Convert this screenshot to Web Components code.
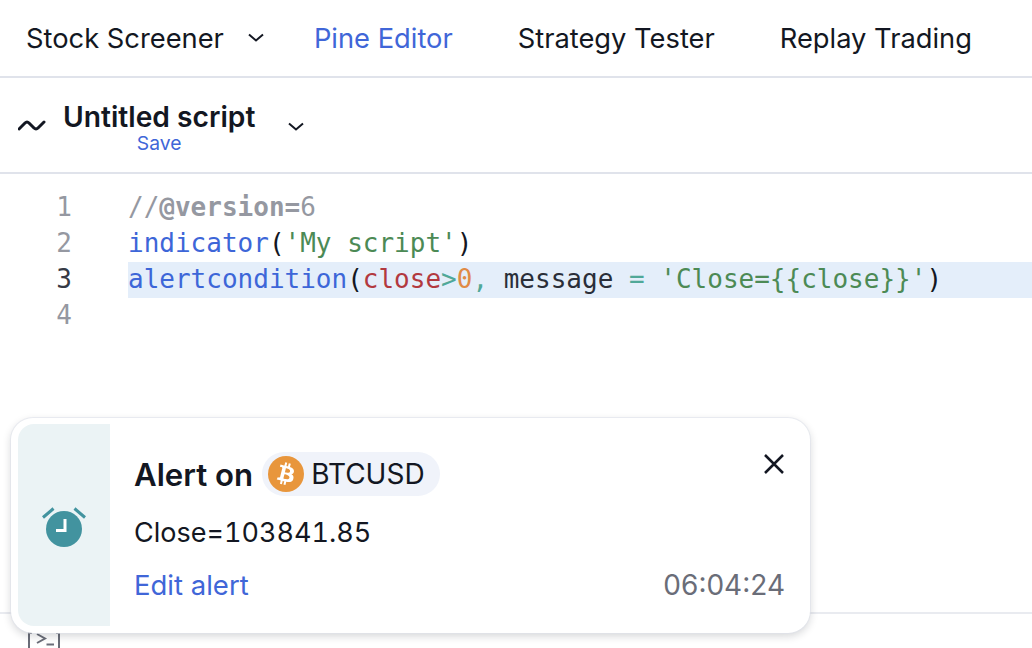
<!DOCTYPE html>
<html lang="en">
<head>
<meta charset="utf-8">
<title>Pine Editor</title>
<style>
html,body{ margin:0; height:100%; background:#fff; }
body{
    display:flex;
    flex-direction:column;
    height:648px;
    overflow:hidden;
    position:relative;
    font-family:Inter,"Liberation Sans",sans-serif;
    color:#131722;
}
</style>
</head>
<body>
<tv-tab-bar>
    <tv-tab dropdown>Stock Screener</tv-tab>
    <tv-tab active>Pine Editor</tv-tab>
    <tv-tab>Strategy Tester</tv-tab>
    <tv-tab>Replay Trading</tv-tab>
</tv-tab-bar>
<tv-script-header title-text="Untitled script" action="Save"></tv-script-header>
<tv-code-editor>
    <tv-code-line number="1"><span class="c">//</span><b class="c">@version=</b><span class="c">6</span></tv-code-line>
    <tv-code-line number="2"><span class="f">indicator</span>(<span class="s">'My script'</span>)</tv-code-line>
    <tv-code-line number="3" active><span class="f">alertcondition</span>(<span class="v">close</span><span class="o">&gt;</span><span class="n">0</span><span class="o">,</span> <span class="p">message</span> <span class="o">=</span> <span class="s">'Close={{close}}'</span>)</tv-code-line>
    <tv-code-line number="4"></tv-code-line>
</tv-code-editor>
<tv-bottom-bar></tv-bottom-bar>
<tv-alert-toast symbol="BTCUSD" message="Close=103841.85" link="Edit alert" time="06:04:24"></tv-alert-toast>

<script>
const chevron = `<svg width="16" height="9" viewBox="0 0 16 9" fill="none" stroke="currentColor" stroke-width="2"><path d="M1 1.500l7 6 7-6"/></svg>`;

class TvTabBar extends HTMLElement {
    constructor() {
        super();
        this.attachShadow({ mode: 'open' }).innerHTML = `
        <style>
        :host{
            display:flex;
            flex:none;
            align-items:center;
            gap:50px;
            box-sizing:border-box;
            height:78px;
            padding:1px 0 0 26px;
            border-bottom:2px solid #e0e3eb;
        }
        </style>
        <slot></slot>`;
    }
}

class TvTab extends HTMLElement {
    constructor() {
        super();
        this.attachShadow({ mode: 'open' }).innerHTML = `
        <style>
        :host{
            display:flex;
            align-items:center;
            gap:24px;
            font-size:27.300px;
            line-height:36px;
            color:#131722;
            white-space:nowrap;
        }
        :host(:not([dropdown])){ padding-right:15px; }
        :host([active]){ color:#4066d8; }
        svg{ display:none; margin-top:-3px; }
        :host([dropdown]) svg{ display:block; }
        </style>
        <slot></slot>${chevron}`;
    }
}

class TvScriptHeader extends HTMLElement {
    constructor() {
        super();
        this.attachShadow({ mode: 'open' }).innerHTML = `
        <style>
        :host{
            display:flex;
            flex:none;
            align-items:flex-start;
            box-sizing:border-box;
            height:96px;
            padding:23px 0 0 18px;
            border-bottom:2px solid #e0e3eb;
        }
        .wave{ margin:17px 17px 0 0; }
        .name{ display:flex; flex-direction:column; align-items:center; }
        .title{ font-size:28.200px; line-height:32px; font-weight:600; }
        .action{ font-size:19.300px; line-height:20px; color:#4066d8; }
        .more{ display:block; margin:21px 0 0 33px; }
        .more svg{ display:block; }
        </style>
        <svg class="wave" width="28" height="16" viewBox="0 0 28 16" fill="none" stroke="currentColor" stroke-width="3" stroke-linecap="round" stroke-linejoin="round"><path d="M1 11L7 5q2-2 4 0l5 5q2 2 4 0l6-6"/></svg>
        <div class="name">
            <span class="title"></span>
            <span class="action"></span>
        </div>
        <span class="more">${chevron}</span>`;
    }

    connectedCallback() {
        this.shadowRoot.querySelector('.title').textContent = this.getAttribute('title-text');
        this.shadowRoot.querySelector('.action').textContent = this.getAttribute('action');
    }
}

class TvCodeEditor extends HTMLElement {
    constructor() {
        super();
        this.attachShadow({ mode: 'open' }).innerHTML = `
        <style>
        :host{
            display:block;
            flex:1;
            padding-top:16px;
            font-family:"DejaVu Sans Mono","Liberation Mono",monospace;
            font-size:26px;
        }
        </style>
        <slot></slot>`;
    }
}

class TvCodeLine extends HTMLElement {
    constructor() {
        super();
        this.attachShadow({ mode: 'open' }).innerHTML = `
        <style>
        :host{
            display:flex;
            height:36px;
            line-height:34px;
            white-space:pre;
            color:#131722;
        }
        .num{
            flex:none;
            width:72px;
            margin-right:56px;
            text-align:right;
            color:#9598a1;
        }
        :host([active]) .num{ color:#363a45; }
        .text{ flex:1; }
        :host([active]) .text{ background:#e4eefa; }
        ::slotted(.c){ color:#9598a1; }
        ::slotted(.f){ color:#3d66d8; }
        ::slotted(.s){ color:#4c8a55; }
        ::slotted(.v){ color:#b2393f; }
        ::slotted(.o){ color:#50a898; }
        ::slotted(.n){ color:#e08a45; }
        ::slotted(.p){ color:#2a2e39; }
        </style>
        <span class="num"></span><span class="text"><slot></slot></span>`;
    }

    connectedCallback() {
        this.shadowRoot.querySelector('.num').textContent = this.getAttribute('number');
    }
}

class TvBottomBar extends HTMLElement {
    constructor() {
        super();
        this.attachShadow({ mode: 'open' }).innerHTML = `
        <style>
        :host{
            display:block;
            flex:none;
            box-sizing:border-box;
            height:36px;
            padding:18px 0 0 28px;
            border-top:2px solid #e9ebf0;
            color:#6a6d78;
        }
        svg{ display:block; }
        </style>
        <svg width="33" height="16" viewBox="0 0 33 16" fill="none" stroke="currentColor" stroke-width="2"><path d="M4 1H1v15M28 1h3v15M9 2l8 4.500-8 4.500M18.500 12.500H26"/></svg>`;
    }
}

class TvAlertToast extends HTMLElement {
    constructor() {
        super();
        this.attachShadow({ mode: 'open' }).innerHTML = `
        <style>
        :host{
            position:absolute;
            left:11px;
            top:418px;
            display:flex;
            box-sizing:border-box;
            width:799px;
            height:215px;
            padding:6px 7px 7px;
            background:#fff;
            border-radius:22px;
            box-shadow:0 0 0 1px rgba(224,227,235,.6), 0 3px 8px rgba(19,23,34,.18);
        }
        .side{
            flex:none;
            display:flex;
            align-items:center;
            justify-content:center;
            box-sizing:border-box;
            width:92px;
            padding-top:3px;
            background:#ebf3f5;
            border-radius:16px 0 0 16px;
        }
        .body{
            flex:1;
            display:flex;
            flex-direction:column;
            padding:28px 18px 0 24px;
        }
        .head{ display:flex; align-items:flex-start; justify-content:space-between; }
        .title{ display:flex; align-items:center; gap:9px; font-size:31.200px; font-weight:600; }
        .label{ padding-top:2px; }
        .pill{
            display:flex;
            align-items:center;
            gap:7px;
            height:44px;
            padding:0 15px 0 6px;
            border-radius:22px;
            background:#f0f3fa;
            font-size:28px;
            font-weight:400;
        }
        .pill svg{ display:block; }
        .close{ display:block; margin:2px 1px 0 0; }
        .msg{ font-size:27px; line-height:36px; margin-top:19px; font-variant-numeric:tabular-nums; }
        .foot{
            display:flex;
            justify-content:space-between;
            line-height:36px;
            margin-top:16px;
        }
        .link{ color:#4066d8; font-size:27.500px; }
        .time{ color:#6a6d78; font-size:28px; }
        </style>
        <div class="side">
            <svg width="44" height="40" viewBox="0 0 44 40" fill="none">
                <circle cx="22" cy="22" r="18" fill="#42939f"/>
                <path d="M1 10.500L11.500 1.500M43 10.500L32.500 1.500" stroke="#42939f" stroke-width="3"/>
                <path d="M23 12v11.500h-9" stroke="#fff" stroke-width="3"/>
            </svg>
        </div>
        <div class="body">
            <div class="head">
                <div class="title">
                    <span class="label">Alert on</span>
                    <span class="pill">
                        <svg width="36" height="36" viewBox="0 0 64 64"><circle cx="32" cy="32" r="32" fill="#e8963c"/><path fill="#fff" d="M46.103 27.444c.637-4.258-2.605-6.547-7.038-8.074l1.438-5.768-3.511-.875-1.4 5.616c-.923-.23-1.871-.447-2.813-.662l1.41-5.653-3.509-.875-1.439 5.766c-.764-.174-1.514-.346-2.242-.527l.004-.018-4.842-1.209-.934 3.75s2.605.597 2.55.634c1.422.355 1.679 1.296 1.636 2.042l-1.638 6.571c.098.025.225.061.365.117l-.371-.092-2.296 9.205c-.174.432-.615 1.08-1.609.834.035.051-2.552-.637-2.552-.637l-1.743 4.019 4.569 1.139c.85.213 1.683.436 2.503.646l-1.453 5.834 3.507.875 1.439-5.772c.958.26 1.888.5 2.798.726l-1.434 5.745 3.511.875 1.453-5.823c5.987 1.133 10.489.676 12.384-4.739 1.527-4.36-.076-6.875-3.226-8.515 2.294-.529 4.022-2.038 4.483-5.155zM38.08 38.693c-1.085 4.36-8.426 2.003-10.806 1.412l1.928-7.729c2.38.594 10.012 1.77 8.878 6.317zm1.086-11.312c-.99 3.966-7.1 1.951-9.082 1.457l1.748-7.01c1.982.494 8.365 1.416 7.334 5.553z"/></svg>
                        <span class="symbol"></span>
                    </span>
                </div>
                <svg class="close" width="20" height="20" viewBox="0 0 20 20" fill="none" stroke="#131722" stroke-width="2.500"><path d="M1 1l18 18M19 1L1 19"/></svg>
            </div>
            <div class="msg"></div>
            <div class="foot"><span class="link"></span><span class="time"></span></div>
        </div>`;
    }

    connectedCallback() {
        const root = this.shadowRoot;
        root.querySelector('.symbol').textContent = this.getAttribute('symbol');
        root.querySelector('.msg').textContent = this.getAttribute('message');
        root.querySelector('.link').textContent = this.getAttribute('link');
        root.querySelector('.time').textContent = this.getAttribute('time');
    }
}

customElements.define('tv-tab-bar', TvTabBar);
customElements.define('tv-tab', TvTab);
customElements.define('tv-script-header', TvScriptHeader);
customElements.define('tv-code-editor', TvCodeEditor);
customElements.define('tv-code-line', TvCodeLine);
customElements.define('tv-bottom-bar', TvBottomBar);
customElements.define('tv-alert-toast', TvAlertToast);
</script>
</body>
</html>
